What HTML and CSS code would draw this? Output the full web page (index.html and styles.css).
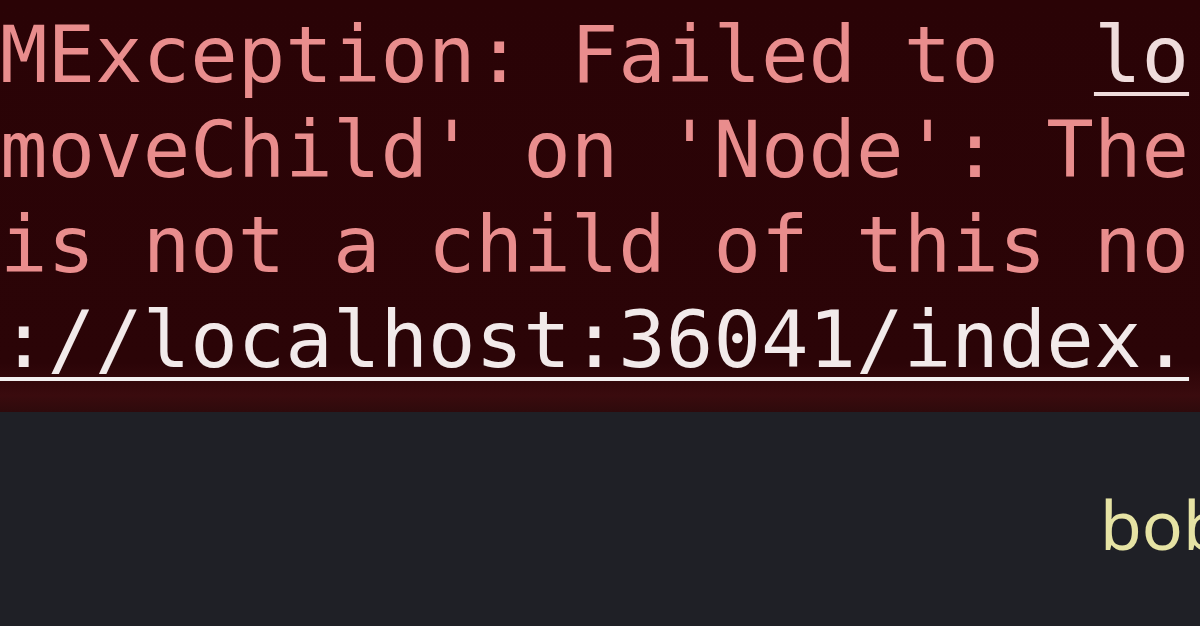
FILE: index.html
```html
<!DOCTYPE html>
<html>
<head>
<meta charset="utf-8">
<link rel="stylesheet" href="styles.css">
</head>
<body>
<div class="screen">
  <div class="error-panel">
    <div class="error-text">MException: Failed to  <span class="link">lo</span>
moveChild' on 'Node': The
is not a child of this no
<span class="link url">://localhost:36041/index.</span></div>
  </div>
  <div class="footer-panel">
    <span class="user">bob</span>
  </div>
</div>
</body>
</html>
```

FILE: styles.css
```css
html, body {
  margin: 0;
  padding: 0;
  width: 1200px;
  height: 626px;
  overflow: hidden;
  background: #1f2026;
}

.screen {
  display: flex;
  flex-direction: column;
  width: 1200px;
  height: 626px;
}

.error-panel {
  height: 412px;
  flex: none;
  box-sizing: border-box;
  padding-top: 8px;
  background: linear-gradient(to bottom, #2a0306 0%, #2b0407 88%, #3a0b0e 96%, #2e0a0c 100%);
  overflow: hidden;
}

.error-text {
  font-family: "DejaVu Sans Mono", monospace;
  font-size: 79px;
  line-height: 95px;
  white-space: pre;
  color: #e98d8d;
}

.link {
  color: #efdcdc;
  text-decoration: underline;
  text-decoration-thickness: 4px;
  text-underline-offset: 10px;
}

.url {
  color: #f2eaea;
  text-decoration-color: #f4f0f0;
}

.footer-panel {
  flex: 1;
  display: flex;
  padding: 72px 0 0 1100px;
  white-space: nowrap;
  overflow: hidden;
  background: #1f2026;
}

.user {
  font-family: "Noto Sans", sans-serif;
  font-size: 68px;
  line-height: 80px;
  color: #e6e3a4;
}
```
